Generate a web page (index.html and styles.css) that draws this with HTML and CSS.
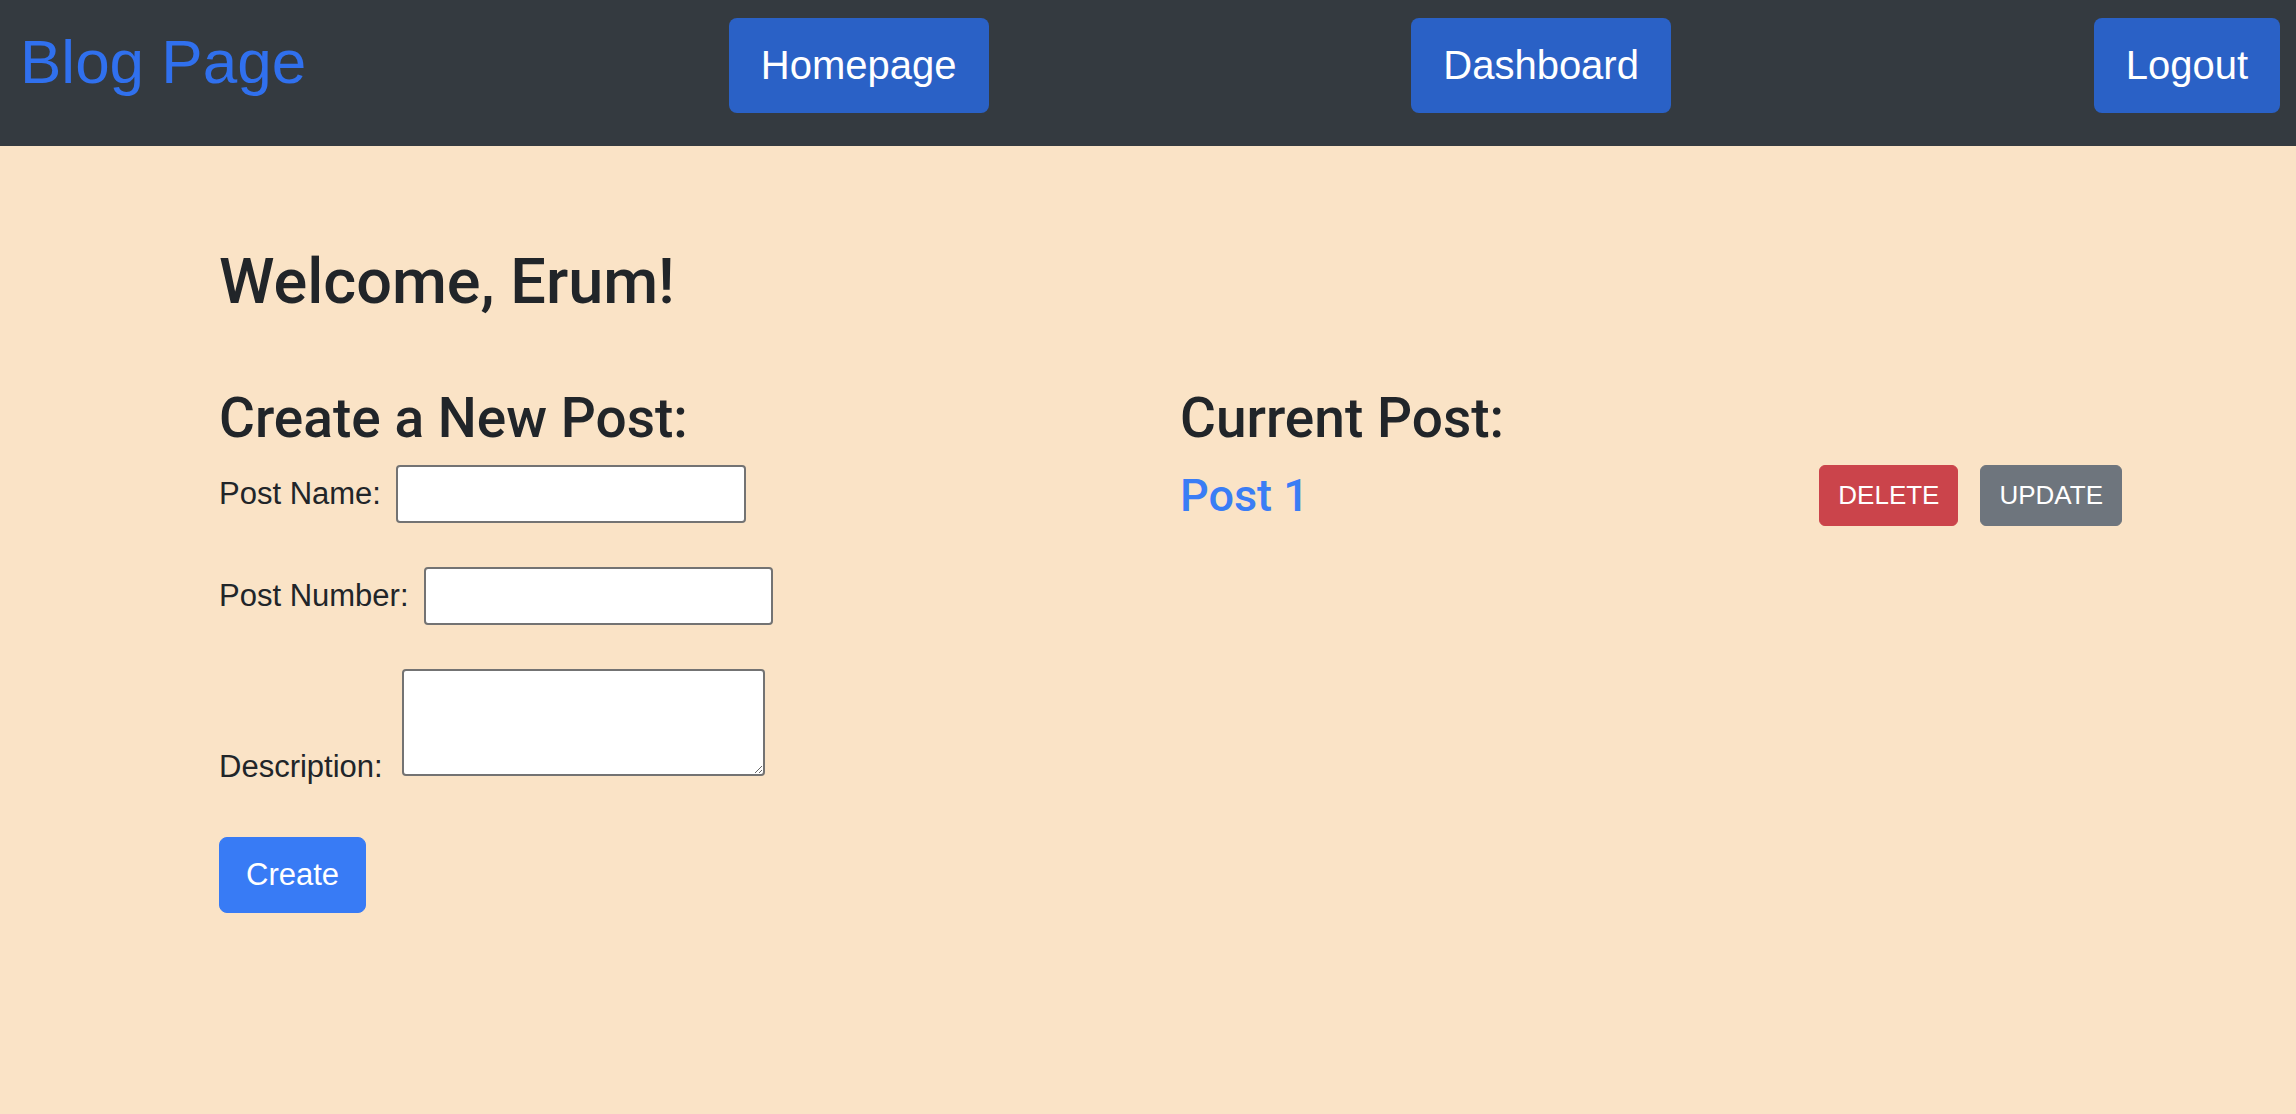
FILE: index.html
```html
<!DOCTYPE html>
<html lang="en">
<head>
<meta charset="utf-8">
<title>Blog Page</title>
<link rel="stylesheet" href="styles.css">
</head>
<body>
<nav class="navbar">
  <a class="brand" href="#">Blog Page</a>
  <a class="nav-btn" href="#">Homepage</a>
  <a class="nav-btn" href="#">Dashboard</a>
  <a class="nav-btn" href="#">Logout</a>
</nav>
<main class="main">
  <h1 class="welcome">Welcome, Erum!</h1>
  <div class="columns">
    <section class="create">
      <h2 class="section-title">Create a New Post:</h2>
      <form class="post-form">
        <div class="field">
          <label class="field-label" for="name">Post Name:</label>
          <input class="text-input w-name" id="name" type="text">
        </div>
        <div class="field">
          <label class="field-label" for="num">Post Number:</label>
          <input class="text-input w-num" id="num" type="text">
        </div>
        <div class="field field-area">
          <label class="field-label area-label" for="desc">Description:</label>
          <textarea class="text-area" id="desc"></textarea>
        </div>
        <button class="btn-create" type="button">Create</button>
      </form>
    </section>
    <section class="current">
      <h2 class="section-title">Current Post:</h2>
      <div class="post-row">
        <a class="post-link" href="#">Post 1</a>
        <div class="post-actions">
          <button class="btn-sm btn-delete" type="button">DELETE</button>
          <button class="btn-sm btn-update" type="button">UPDATE</button>
        </div>
      </div>
    </section>
  </div>
</main>
</body>
</html>
```

FILE: styles.css
```css
html, body {
  margin: 0;
  padding: 0;
  background: #fae3c6;
  font-family: "Liberation Sans", Arial, sans-serif;
  color: #212529;
}

body {
  min-height: 1114px;
}

.navbar {
  display: flex;
  justify-content: space-between;
  align-items: flex-start;
  height: 146px;
  box-sizing: border-box;
  padding: 18px 16px 0 20px;
  background: #343a40;
}

.brand {
  display: block;
  margin-top: 8px;
  font-size: 62px;
  line-height: 72px;
  color: #3070ee;
  text-decoration: none;
}

.nav-btn {
  display: block;
  padding: 17px 32px;
  font-size: 40px;
  line-height: 61px;
  color: #ffffff;
  background: #2a61c6;
  border-radius: 8px;
  text-decoration: none;
}

.main {
  padding: 98px 0 0 219px;
}

.welcome {
  margin: 0 0 66px;
  font-family: Roboto, "Liberation Sans", sans-serif;
  font-size: 63px;
  line-height: 76px;
  font-weight: 500;
}

.columns {
  display: grid;
  grid-template-columns: 961px 942px;
}

.section-title {
  margin: 0 0 15px;
  font-family: Roboto, "Liberation Sans", sans-serif;
  font-size: 55px;
  line-height: 64px;
  font-weight: 500;
}

.post-form {
  display: flex;
  flex-direction: column;
  align-items: flex-start;
}

.field {
  display: flex;
  align-items: center;
  gap: 15px;
  margin-bottom: 44px;
}

.field-area {
  align-items: flex-end;
  gap: 19px;
  margin-bottom: 61px;
}

.field-label {
  font-size: 31px;
  line-height: 58px;
  color: #212529;
}

.area-label {
  line-height: 31px;
  margin-bottom: -6px;
}

.text-input {
  box-sizing: border-box;
  height: 58px;
  border: 2px solid #737373;
  border-radius: 4px;
  background: #ffffff;
  font-size: 26px;
  padding: 0 6px;
}

.w-name { width: 350px; }
.w-num { width: 349px; }

.text-area {
  box-sizing: border-box;
  width: 363px;
  height: 107px;
  border: 2px solid #737373;
  border-radius: 4px;
  background: #ffffff;
  font-size: 26px;
  padding: 4px;
}

.btn-create {
  box-sizing: border-box;
  height: 76px;
  padding: 13px 26px;
  border: 1px solid #387bf5;
  border-radius: 8px;
  background: #387bf5;
  color: #ffffff;
  font-family: "Liberation Sans", Arial, sans-serif;
  font-size: 31px;
  line-height: 48px;
  cursor: pointer;
}

.post-row {
  display: flex;
  justify-content: space-between;
  align-items: center;
  margin-top: 14px;
}

.post-link {
  font-family: Roboto, "Liberation Sans", sans-serif;
  font-size: 45px;
  line-height: 61px;
  font-weight: 500;
  color: #3a7df5;
  text-decoration: none;
}

.post-actions {
  display: flex;
  gap: 22px;
}

.btn-sm {
  box-sizing: border-box;
  height: 61px;
  padding: 10px 18px;
  border: 1px solid transparent;
  border-radius: 6px;
  color: #ffffff;
  font-family: "Liberation Sans", Arial, sans-serif;
  font-size: 26px;
  line-height: 39px;
  cursor: pointer;
}

.btn-delete {
  background: #cb444b;
  border-color: #cb444b;
}

.btn-update {
  background: #6e757d;
  border-color: #6e757d;
}
```
